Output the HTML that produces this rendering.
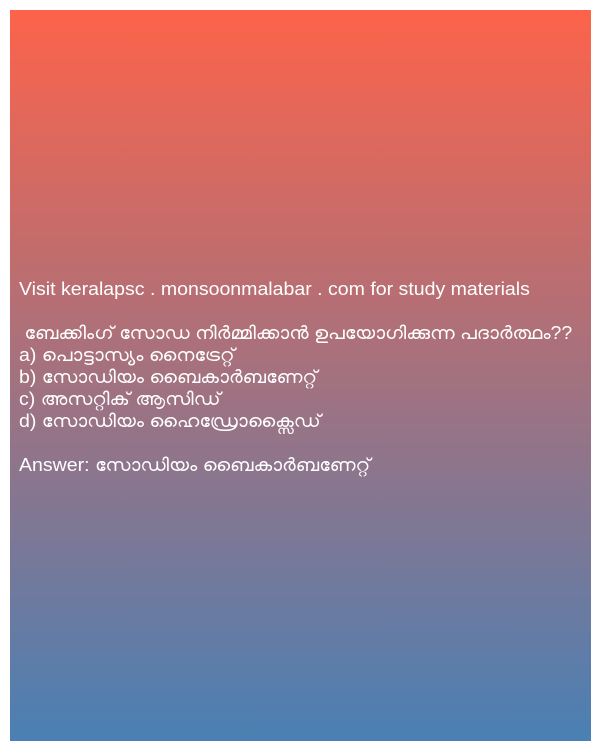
<!DOCTYPE html>
<html><head><meta charset="utf-8"><style>
html,body{margin:0;padding:0;background:#fff;width:600px;height:750px;overflow:hidden}
.box{position:absolute;left:10px;top:10px;width:581px;height:731px;background:linear-gradient(to bottom,#fd634a 0%,#4a80b4 100%)}
.t{position:absolute;left:19px;top:278px;color:#fff;font-family:"Liberation Sans","DejaVu Sans",sans-serif;font-size:18px;line-height:22px;white-space:pre;transform:scaleX(1.085);transform-origin:0 0}
</style></head><body>
<div class="box"></div>
<div class="t">Visit keralapsc . monsoonmalabar . com for study materials

 ബേക്കിംഗ് സോഡ നിർമ്മിക്കാൻ ഉപയോഗിക്കുന്ന പദാർത്ഥം??
a) പൊട്ടാസ്യം നൈട്രേറ്റ്
b) സോഡിയം ബൈകാർബണേറ്റ്
c) അസറ്റിക് ആസിഡ്
d) സോഡിയം ഹൈഡ്രോക്സൈഡ്

Answer: സോഡിയം ബൈകാർബണേറ്റ്</div>
</body></html>
